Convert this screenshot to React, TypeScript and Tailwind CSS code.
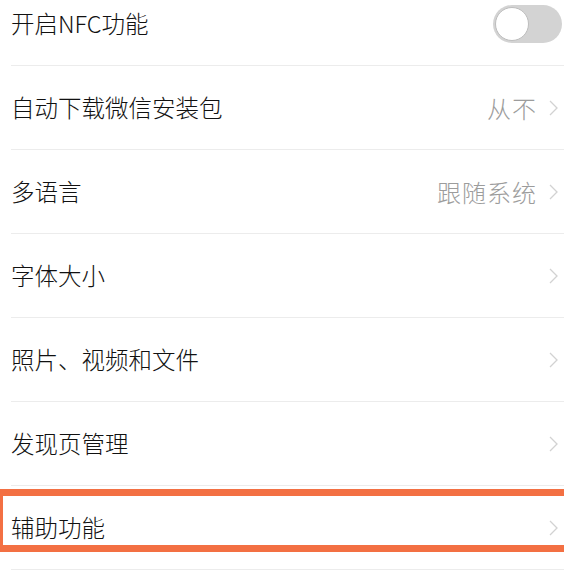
const rows: { label: string; value?: string; toggle?: boolean }[] = [
  { label: '开启NFC功能', toggle: true },
  { label: '自动下载微信安装包', value: '从不' },
  { label: '多语言', value: '跟随系统' },
  { label: '字体大小' },
  { label: '照片、视频和文件' },
  { label: '发现页管理' },
  { label: '辅助功能' },
  { label: '' },
];

function Chevron() {
  return (
    <svg width="9" height="16" viewBox="0 0 9 16" className="ml-[12px] mr-[6px] shrink-0">
      <polyline points="1,1 8,8 1,15" fill="none" stroke="#d2d2d2" strokeWidth="1.3" />
    </svg>
  );
}

function Toggle() {
  return (
    <div className="mr-[2px] flex h-[38px] w-[69px] items-center rounded-full bg-[#d3d3d3] px-[2px]">
      <div className="h-[34px] w-[34px] rounded-full border border-[#bdbdbd] bg-white" />
    </div>
  );
}

export default function App() {
  return (
    <div
      className="relative h-[588px] w-[564px] overflow-hidden bg-white"
      style={{ fontFamily: '"Noto Sans CJK SC", "Noto Sans", sans-serif' }}
    >
      <div className="mt-[-18px] flex flex-col">
        {rows.map((r, i) => (
          <div key={i} className="ml-[11px] flex h-[84px] items-center border-b border-[#ececec]">
            <span className="flex-1 text-[23.5px] font-light leading-none text-[#111111]">{r.label}</span>
            {r.value && <span className="text-[24px] font-light leading-none tracking-[1px] text-[#9c9c9c]">{r.value}</span>}
            {r.toggle ? <Toggle /> : r.label && <Chevron />}
          </div>
        ))}
      </div>
      {/* highlight box */}
      <div className="absolute left-0 top-[489px] h-[63px] w-[580px] border-y-[7px] border-l-[3px] border-[#f37043]" />
    </div>
  );
}
